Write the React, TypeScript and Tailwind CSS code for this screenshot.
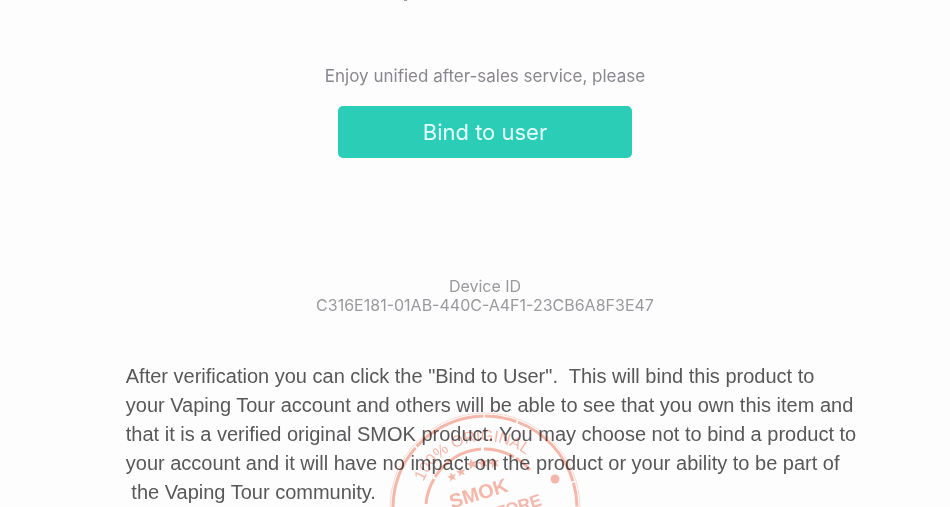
type Star = { x: number; y: number; size: number };

const stars: Star[] = [
  { x: 63, y: 65, size: 5 },
  { x: 72, y: 60, size: 5 },
  { x: 83, y: 52, size: 6 },
  { x: 94, y: 51, size: 6 },
  { x: 105, y: 51, size: 6 },
];

const starPoints = ({ x, y, size }: Star) =>
  Array.from({ length: 10 }, (_, i) => {
    const r = i % 2 === 0 ? size : size * 0.42;
    const a = (i * 36 - 106) * (Math.PI / 180);
    return `${x + r * Math.cos(a)},${y + r * Math.sin(a)}`;
  }).join(' ');

function OriginalStamp() {
  return (
    <svg
      aria-hidden="true"
      viewBox="0 0 192 192"
      className="pointer-events-none absolute top-[50px] left-1/2 h-48 w-48 -translate-x-1/2 font-['Liberation_Sans',Arial,sans-serif] mix-blend-multiply"
      fill="none"
      stroke="#f7b9ab"
    >
      <circle cx="96" cy="96" r="95" strokeWidth="1" stroke="#fbdcd5" />
      <circle
        cx="96"
        cy="96"
        r="92"
        strokeWidth="3"
        pathLength="360"
        strokeDasharray="70 1 55 1 50 1 43 1 47 1 20 1 52 1 15 1"
      />
      <path d="M37 92A59 59 0 0 1 45 67" strokeWidth="3" />
      <path d="M46 65A59 59 0 0 1 92 37" strokeWidth="3" />
      <path d="M95 37A59 59 0 0 1 125 45" strokeWidth="3" />
      <path d="M127 46A59 59 0 0 1 141 58" strokeWidth="3" />
      <path d="M37 96A59 59 0 0 0 155 96" strokeWidth="3" />
      <path id="stamp-ring" d="M29 96A67 67 0 0 1 163 96" stroke="none" />
      <g fill="#f7b9ab" stroke="none">
        <text fontSize="16">
          <textPath href="#stamp-ring" startOffset="27">
            100% ORIGINAL
          </textPath>
        </text>
        {stars.map((star) => (
          <polygon key={star.x} points={starPoints(star)} />
        ))}
        <circle cx="166" cy="67" r="4.5" />
        <g transform="rotate(-17 96 96)" fontWeight="bold">
          <text x="64" y="87" fontSize="20">
            SMOK
          </text>
          <text x="98" y="110" fontSize="17" textAnchor="middle">
            VAPE STORE
          </text>
        </g>
      </g>
    </svg>
  );
}

function App() {
  return (
    <main className="flex min-h-screen flex-col overflow-hidden bg-[#fdfdfd] pl-5 font-[Inter,Roboto,sans-serif]">
      {/* tail of the line above, scrolled out of view */}
      <div className="flex h-16 justify-center pr-40">
        <span className="h-px w-[3px] bg-[#9a989d]" />
      </div>
      <div className="flex flex-col items-center">
        <p className="text-[17px] leading-6 text-[#89868d]">
          Enjoy unified after-sales service, please
        </p>
        <button
          type="button"
          className="mt-[18px] h-[52px] w-[294px] rounded-[5px] bg-[#2bcdb7] text-[22px] text-[#e6fffb]"
        >
          Bind to user
        </button>
        <div className="mt-[119px] text-center text-base leading-[19px] text-[#9b999e]">
          <h2>Device ID</h2>
          <p>C316E181-01AB-440C-A4F1-23CB6A8F3E47</p>
        </div>
      </div>

      <div className="relative mt-[47px] flex grow justify-center overflow-hidden">
        <p className="pl-3 font-['Liberation_Sans',Arial,sans-serif] text-[20px] leading-[29px] whitespace-pre text-[#58585a]">
          {'After verification you can click the "Bind to User".  This will bind this product to\n'}
          {'your Vaping Tour account and others will be able to see that you own this item and\n'}
          {'that it is a verified original SMOK product. You may choose not to bind a product to\n'}
          {'your account and it will have no impact on the product or your ability to be part of\n'}
          {' the Vaping Tour community.'}
        </p>
        <OriginalStamp />
      </div>
    </main>
  );
}

export default App;
